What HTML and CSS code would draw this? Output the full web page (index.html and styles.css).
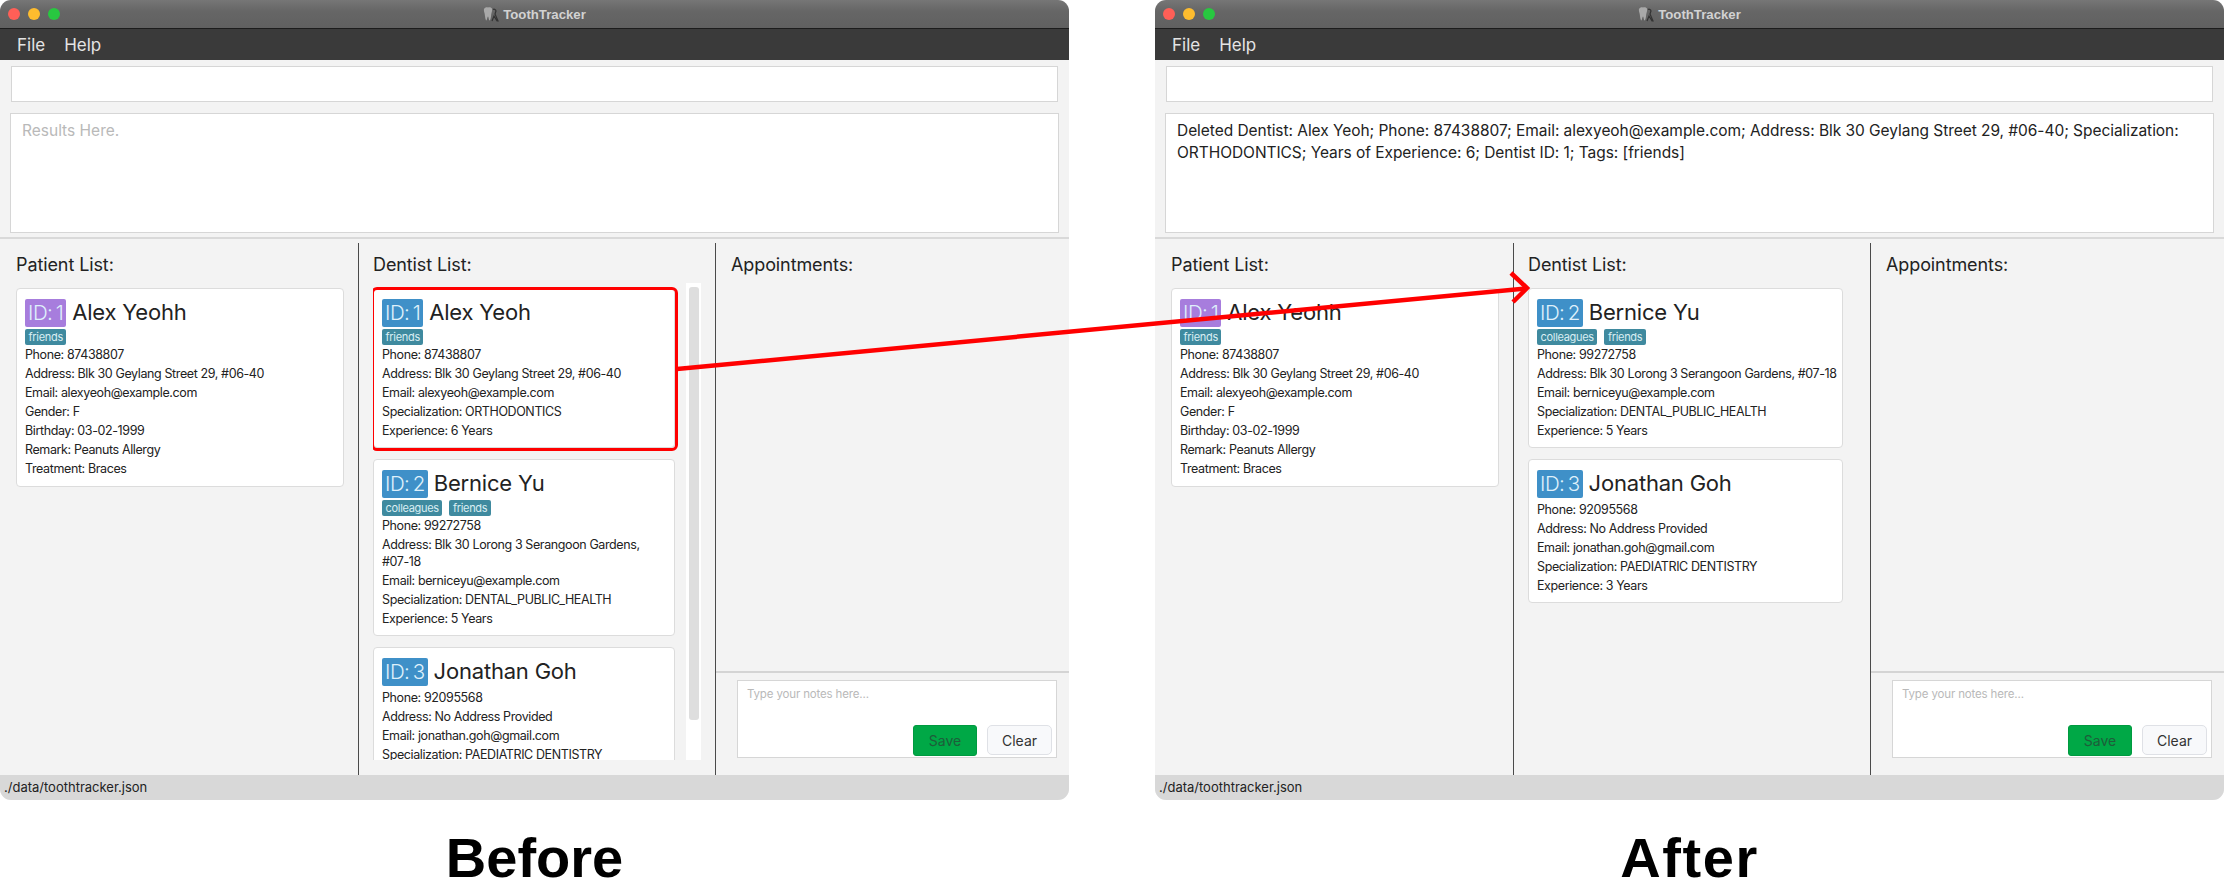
FILE: index.html
```html
<!DOCTYPE html>
<html lang="en">
<head>
<meta charset="utf-8">
<title>ToothTracker before and after</title>
<link rel="stylesheet" href="styles.css">
</head>
<body>
<main class="stage">
  <section class="shot">
    <div class="window">
      <header class="titlebar">
        <span class="lights"><i class="light light-red"></i><i class="light light-yellow"></i><i class="light light-green"></i></span>
        <span class="apptitle"><svg class="tooth" viewBox="0 0 16 16"><path d="M1 3c1-2 3-2 4-1.500 1-.5 3-.5 4 1 .6 2-.5 4-.8 6-.2 2-.5 5-1.500 6-1 0-1-4-1.700-4S4 15 3 14.500C2 12 2 9 1.500 7 1 5.500.7 4 1 3z" fill="#a9a9a9"/><path d="M10 3.500a2 2 0 0 1 3 1.500l-1 3 3 7h-1l-3-5-2 5" fill="none" stroke="#333" stroke-width="1.200"/></svg>ToothTracker</span>
      </header>
      <nav class="menubar"><span>File</span><span>Help</span></nav>
      <div class="command"></div>
      <div class="results results-empty">Results Here.</div>
      <div class="columns">
        <section class="col col-patient">
          <h2 class="col-title">Patient List:</h2>
          <div class="list">
            <article class="card">
              <div class="head"><span class="id id-patient">ID: 1</span><span class="name">Alex Yeohh</span></div>
              <div class="tags"><span class="tag">friends</span></div>
              <p class="row">Phone: 87438807</p>
              <p class="row">Address: Blk 30 Geylang Street 29, #06-40</p>
              <p class="row">Email: alexyeoh@example.com</p>
              <p class="row">Gender: F</p>
              <p class="row">Birthday: 03-02-1999</p>
              <p class="row">Remark: Peanuts Allergy</p>
              <p class="row">Treatment: Braces</p>
            </article>
          </div>
        </section>
        <section class="col col-dentist">
          <h2 class="col-title">Dentist List:</h2>
          <div class="list list-scroll">
            <div class="cards">
              <article class="card card-picked">
                <div class="head"><span class="id">ID: 1</span><span class="name">Alex Yeoh</span></div>
                <div class="tags"><span class="tag">friends</span></div>
                <p class="row">Phone: 87438807</p>
                <p class="row">Address: Blk 30 Geylang Street 29, #06-40</p>
                <p class="row">Email: alexyeoh@example.com</p>
                <p class="row">Specialization: ORTHODONTICS</p>
                <p class="row">Experience: 6 Years</p>
              </article>
              <article class="card">
                <div class="head"><span class="id">ID: 2</span><span class="name">Bernice Yu</span></div>
                <div class="tags"><span class="tag">colleagues</span><span class="tag">friends</span></div>
                <p class="row">Phone: 99272758</p>
                <p class="row">Address: Blk 30 Lorong 3 Serangoon Gardens, <span class="nobreak">#07-18</span></p>
                <p class="row">Email: berniceyu@example.com</p>
                <p class="row">Specialization: DENTAL_PUBLIC_HEALTH</p>
                <p class="row">Experience: 5 Years</p>
              </article>
              <article class="card">
                <div class="head"><span class="id">ID: 3</span><span class="name">Jonathan Goh</span></div>
                <p class="row">Phone: 92095568</p>
                <p class="row">Address: No Address Provided</p>
                <p class="row">Email: jonathan.goh@gmail.com</p>
                <p class="row">Specialization: PAEDIATRIC DENTISTRY</p>
                <p class="row">Experience: 3 Years</p>
              </article>
            </div>
            <div class="scrolltrack"><div class="scrollthumb"></div></div>
          </div>
        </section>
        <section class="col col-appts">
          <h2 class="col-title">Appointments:</h2>
          <div class="appts-space"></div>
          <div class="notes-wrap">
            <div class="notes">
              <span class="notes-hint">Type your notes here...</span>
              <div class="notes-actions"><button class="btn btn-save">Save</button><button class="btn btn-clear">Clear</button></div>
            </div>
          </div>
        </section>
      </div>
      <footer class="status">./data/toothtracker.json</footer>
    </div>
    <h1 class="caption">Before</h1>
  </section>

  <section class="shot">
    <div class="window">
      <header class="titlebar">
        <span class="lights"><i class="light light-red"></i><i class="light light-yellow"></i><i class="light light-green"></i></span>
        <span class="apptitle"><svg class="tooth" viewBox="0 0 16 16"><path d="M1 3c1-2 3-2 4-1.500 1-.5 3-.5 4 1 .6 2-.5 4-.8 6-.2 2-.5 5-1.500 6-1 0-1-4-1.700-4S4 15 3 14.500C2 12 2 9 1.500 7 1 5.500.7 4 1 3z" fill="#a9a9a9"/><path d="M10 3.500a2 2 0 0 1 3 1.500l-1 3 3 7h-1l-3-5-2 5" fill="none" stroke="#333" stroke-width="1.200"/></svg>ToothTracker</span>
      </header>
      <nav class="menubar"><span>File</span><span>Help</span></nav>
      <div class="command"></div>
      <div class="results">Deleted Dentist: Alex Yeoh; Phone: 87438807; Email: alexyeoh@example.com; Address: Blk 30 Geylang Street 29, #06-40; Specialization: ORTHODONTICS; Years of Experience: 6; Dentist ID: 1; Tags: [friends]</div>
      <div class="columns">
        <section class="col col-patient">
          <h2 class="col-title">Patient List:</h2>
          <div class="list">
            <article class="card">
              <div class="head"><span class="id id-patient">ID: 1</span><span class="name">Alex Yeohh</span></div>
              <div class="tags"><span class="tag">friends</span></div>
              <p class="row">Phone: 87438807</p>
              <p class="row">Address: Blk 30 Geylang Street 29, #06-40</p>
              <p class="row">Email: alexyeoh@example.com</p>
              <p class="row">Gender: F</p>
              <p class="row">Birthday: 03-02-1999</p>
              <p class="row">Remark: Peanuts Allergy</p>
              <p class="row">Treatment: Braces</p>
            </article>
          </div>
        </section>
        <section class="col col-dentist">
          <h2 class="col-title">Dentist List:</h2>
          <div class="list">
            <div class="cards cards-wide">
              <article class="card">
                <div class="head"><span class="id">ID: 2</span><span class="name">Bernice Yu</span></div>
                <div class="tags"><span class="tag">colleagues</span><span class="tag">friends</span></div>
                <p class="row">Phone: 99272758</p>
                <p class="row">Address: Blk 30 Lorong 3 Serangoon Gardens, <span class="nobreak">#07-18</span></p>
                <p class="row">Email: berniceyu@example.com</p>
                <p class="row">Specialization: DENTAL_PUBLIC_HEALTH</p>
                <p class="row">Experience: 5 Years</p>
              </article>
              <article class="card">
                <div class="head"><span class="id">ID: 3</span><span class="name">Jonathan Goh</span></div>
                <p class="row">Phone: 92095568</p>
                <p class="row">Address: No Address Provided</p>
                <p class="row">Email: jonathan.goh@gmail.com</p>
                <p class="row">Specialization: PAEDIATRIC DENTISTRY</p>
                <p class="row">Experience: 3 Years</p>
              </article>
            </div>
          </div>
        </section>
        <section class="col col-appts">
          <h2 class="col-title">Appointments:</h2>
          <div class="appts-space"></div>
          <div class="notes-wrap">
            <div class="notes">
              <span class="notes-hint">Type your notes here...</span>
              <div class="notes-actions"><button class="btn btn-save">Save</button><button class="btn btn-clear">Clear</button></div>
            </div>
          </div>
        </section>
      </div>
      <footer class="status">./data/toothtracker.json</footer>
    </div>
    <h1 class="caption caption-after">After</h1>
  </section>

  <svg class="arrow" viewBox="0 0 2224 891" aria-hidden="true">
    <line x1="677" y1="369" x2="1526" y2="288.500"/>
    <polyline points="1511,273 1527,288 1513,302"/>
  </svg>
</main>
</body>
</html>
```

FILE: styles.css
```css
* { box-sizing: border-box; }

html, body {
  margin: 0;
  padding: 0;
  background: #fff;
}

body {
  font-family: Inter, "Noto Sans", sans-serif;
  color: #222;
}

.stage {
  position: relative;
  display: flex;
  justify-content: space-between;
  width: 2224px;
  height: 891px;
  overflow: hidden;
}

.shot { width: 1069px; }

.window {
  display: flex;
  flex-direction: column;
  height: 800px;
  background: #f3f3f3;
  border-radius: 11px;
  overflow: hidden;
}

.titlebar {
  position: relative;
  flex: none;
  height: 29px;
  display: flex;
  align-items: center;
  justify-content: center;
  background: linear-gradient(#767676, #666 40%, #606060);
  border-bottom: 1px solid #1c1c1c;
}

.lights {
  position: absolute;
  left: 8px;
  top: 8px;
  display: flex;
  gap: 8px;
}

.light {
  width: 12px;
  height: 12px;
  border-radius: 50%;
}

.light-red { background: #ff5f57; }
.light-yellow { background: #febc2e; }
.light-green { background: #28c840; }

.apptitle {
  display: flex;
  align-items: center;
  gap: 4px;
  font-family: "Liberation Sans", sans-serif;
  font-size: 13.200px;
  font-weight: 700;
  color: #d2d2d2;
}

.tooth { width: 16px; height: 16px; }

.menubar {
  flex: none;
  height: 31px;
  display: flex;
  align-items: center;
  gap: 19px;
  padding-left: 17px;
  background: #3a3a3a;
  color: #e4e4e4;
  font-size: 17px;
}

.command {
  flex: none;
  height: 36px;
  margin: 6px 11px 0;
  background: #fff;
  border: 1px solid #d6d6d6;
}

.results {
  flex: none;
  height: 120px;
  margin: 11px 10px 0;
  padding: 6px 11px;
  background: #fff;
  border: 1px solid #d6d6d6;
  font-size: 15.500px;
  letter-spacing: -0.050px;
  line-height: 22px;
  color: #222;
}

.results-empty {
  color: #b9b9b9;
  letter-spacing: 0;
}

.columns {
  flex: 1;
  min-height: 0;
  display: grid;
  grid-template-columns: 359px 357px 1fr;
  margin-top: 4px;
  padding-top: 4px;
  border-top: 2px solid #d9d9d9;
}

.col {
  display: flex;
  flex-direction: column;
  min-height: 0;
  border-right: 1.500px solid #4a4a4a;
}

.col-patient { padding: 0 14px 0 16px; }
.col-dentist { padding: 0 14px 15px 14px; }
.col-appts { border-right: 0; }

.col-title {
  flex: none;
  margin: 11px 0 7px;
  font-size: 18px;
  letter-spacing: -0.100px;
  line-height: 22px;
  font-weight: 400;
  color: #222;
}

.col-appts .col-title { margin-left: 15px; }

.list {
  flex: 1;
  min-height: 0;
  padding-top: 5px;
}

.list-scroll {
  display: flex;
  overflow: hidden;
}

.cards {
  flex: 1;
  min-width: 0;
  display: flex;
  flex-direction: column;
  gap: 11px;
  padding-right: 11px;
}

.cards-wide { padding-right: 13px; }

.card {
  position: relative;
  flex: none;
  padding: 10px 4px 7px 8px;
  background: #fff;
  border: 1px solid #dcdcdc;
  border-radius: 4px;
}

.col-patient .card { padding-bottom: 8px; }

.card-picked::after {
  content: "";
  position: absolute;
  inset: -2px -4px -4px -3px;
  border: 3px solid #f00;
  border-radius: 6px;
}

.head {
  display: flex;
  align-items: flex-start;
  gap: 6px;
  height: 28px;
}

.id {
  display: block;
  height: 28px;
  padding: 0 3px;
  border-radius: 2px;
  background: #3f90c8;
  color: #dff0fb;
  font-size: 20.500px;
  letter-spacing: -0.500px;
  word-spacing: -2px;
  line-height: 28px;
  font-weight: 300;
}

.id-patient { background: #a77ddd; }

.name {
  font-size: 22px;
  letter-spacing: -0.200px;
  line-height: 26px;
  color: #222;
}

.tags {
  display: flex;
  gap: 7px;
  margin-top: 2px;
  height: 16px;
}

.tag {
  height: 16px;
  padding: 0 3.500px;
  border-radius: 2px;
  background: #3f8a9f;
  color: #d9eef3;
  font-size: 11px;
  letter-spacing: -0.300px;
  line-height: 16px;
}

.head + .row { margin-top: 2px; }

.row {
  margin: 0;
  padding: 1px 0;
  font-size: 12.500px;
  letter-spacing: -0.390px;
  line-height: 17px;
  color: #222;
}

.nobreak { white-space: nowrap; }

.scrolltrack {
  flex: none;
  width: 15px;
  margin-top: -5px;
  padding: 4px 2px 0 3px;
  background: #fff;
}

.scrollthumb {
  height: 433px;
  background: #dedede;
  border-radius: 3px;
}

.appts-space {
  flex: 1;
  border-bottom: 2px solid #d4d4d4;
}

.notes-wrap {
  flex: none;
  padding: 7px 12px 17px 21px;
}

.notes {
  display: flex;
  flex-direction: column;
  justify-content: space-between;
  height: 78px;
  padding: 3px 4px 1px 9px;
  background: #fff;
  border: 1px solid #d6d6d6;
}

.notes-hint {
  font-size: 11.500px;
  letter-spacing: -0.150px;
  line-height: 20px;
  color: #b9b9b9;
}

.notes-actions {
  display: flex;
  justify-content: flex-end;
  align-items: flex-start;
  gap: 10px;
}

.btn {
  margin: 0;
  padding: 0;
  font-family: Inter, sans-serif;
  font-size: 14px;
}

.btn-save {
  width: 64px;
  height: 31px;
  background: #00a846;
  border: 1px solid #009a40;
  border-radius: 3px;
  color: #1e5d3a;
}

.btn-clear {
  width: 65px;
  height: 30px;
  background: #f8f9fb;
  border: 1px solid #dfe1e6;
  border-radius: 5px;
  color: #333;
}

.status {
  flex: none;
  height: 25px;
  padding-left: 4px;
  background: #d8d8d8;
  font-size: 13px;
  line-height: 25px;
  color: #222;
}

.caption {
  margin: 28px 0 0;
  font-family: "Liberation Sans", sans-serif;
  font-size: 56px;
  line-height: 60px;
  font-weight: 700;
  text-align: center;
  color: #000;
}

.caption-after { letter-spacing: 1.600px; }

.arrow {
  position: absolute;
  left: 0;
  top: 0;
  width: 2224px;
  height: 891px;
  fill: none;
  stroke: #f00;
  stroke-width: 4.500px;
  pointer-events: none;
}
```
